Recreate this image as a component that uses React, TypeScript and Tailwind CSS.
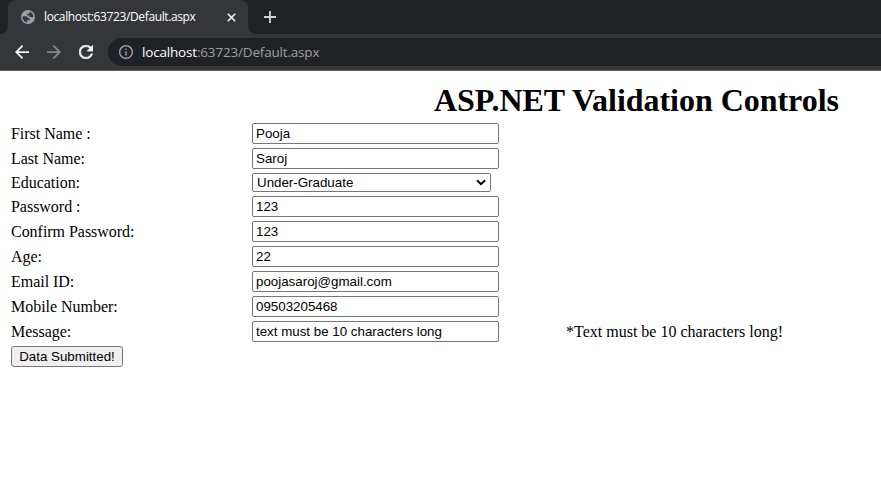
import React from "react";

const serif = "font-['Liberation_Serif','Times_New_Roman',serif]";
const sans = "font-['Liberation_Sans',Arial,sans-serif]";
const chromeFont = "font-['Open_Sans','Noto_Sans',sans-serif]";

type Field = { label: string; value: string; kind?: "select"; error?: string };

const fields: Field[] = [
  { label: "First Name :", value: "Pooja" },
  { label: "Last Name:", value: "Saroj" },
  { label: "Education:", value: "Under-Graduate", kind: "select" },
  { label: "Password :", value: "123" },
  { label: "Confirm Password:", value: "123" },
  { label: "Age:", value: "22" },
  { label: "Email ID:", value: "poojasaroj@gmail.com" },
  { label: "Mobile Number:", value: "09503205468" },
  {
    label: "Message:",
    value: "text must be 10 characters long",
    error: "*Text must be 10 characters long!",
  },
];

function GlobeIcon() {
  return (
    <svg width="14" height="14" viewBox="0 0 14 14">
      <circle cx="7" cy="7" r="7" fill="#9aa0a6" />
      <path
        d="M1.6 6.2 H4.6 C6.4 6.2 7 7.2 7 8.6 H8.8 V10.2 H6.2 V12.3 C3.4 12 1.4 9.6 1.6 6.2Z M8.6 1.8 C11 2.4 12.5 4.6 12.4 7.4 L11 6.9 H8.6 V5.4 H6.2 V3.8 H8.6 Z"
        fill="#35363a"
      />
    </svg>
  );
}

function TabStrip() {
  return (
    <div className="flex h-[34px] bg-[#202124]">
      <div className="flex w-2 items-end bg-[#35363a]">
        <div className="h-[34px] w-2 rounded-br-lg bg-[#202124]" />
      </div>
      <div className="flex w-[240px] items-center rounded-t-lg bg-[#35363a] pl-[13px]">
        <GlobeIcon />
        <span
          className={`${chromeFont} ml-[9px] w-[180px] whitespace-nowrap text-[12px] leading-4 tracking-[-0.38px] text-white`}
        >
          localhost:63723/Default.aspx
        </span>
        <svg className="ml-[3px]" width="9" height="9" viewBox="0 0 9 9">
          <path d="M.8 .8 8.2 8.2M8.2 .8 .8 8.2" stroke="#f1f3f4" strokeWidth="1.6" />
        </svg>
      </div>
      <div className="flex w-2 bg-[#35363a]">
        <div className="h-[34px] w-2 rounded-bl-lg bg-[#202124]" />
      </div>
      <svg className="ml-2 mt-[11px]" width="12" height="12" viewBox="0 0 12 12">
        <path d="M6 0V12M0 6H12" stroke="#d2d4d7" strokeWidth="1.8" />
      </svg>
    </div>
  );
}

function Toolbar() {
  return (
    <div className="flex h-[37px] items-center border-b border-[#5b5b60] bg-[#35363a] pl-[15px]">
      <svg width="14" height="14" viewBox="4 4 16 16" fill="#f1f3f4">
        <path d="M20 11H7.83l5.59-5.59L12 4l-8 8 8 8 1.41-1.41L7.83 13H20v-2z" />
      </svg>
      <svg className="ml-[18px]" width="14" height="14" viewBox="4 4 16 16" fill="#86888b">
        <path d="M12 4l-1.41 1.41L16.17 11H4v2h12.17l-5.58 5.59L12 20l8-8z" />
      </svg>
      <svg
        className="ml-[18px]"
        width="14"
        height="14"
        viewBox="4 4 16 16"
        fill="#f1f3f4"
        stroke="#f1f3f4"
        strokeWidth="0.5"
      >
        <path d="M17.65 6.35C16.2 4.9 14.21 4 12 4c-4.42 0-7.99 3.58-7.99 8s3.57 8 7.99 8c3.73 0 6.84-2.55 7.73-6h-2.08c-.82 2.33-3.04 4-5.65 4-3.31 0-6-2.69-6-6s2.69-6 6-6c1.66 0 3.14.69 4.22 1.78L13 11h7V4l-2.35 2.35z" />
      </svg>
      <div className="ml-[15px] flex h-7 flex-1 items-center rounded-l-full bg-[#202124] pl-[11px]">
        <svg width="14" height="14" viewBox="2 2 20 20" fill="#9aa0a6">
          <path d="M11 17h2v-6h-2v6zm1-15C6.48 2 2 6.48 2 12s4.48 10 10 10 10-4.48 10-10S17.52 2 12 2zm0 18c-4.41 0-8-3.59-8-8s3.59-8 8-8 8 3.59 8 8-3.59 8-8 8zM11 9h2V7h-2v2z" />
        </svg>
        <span
          className={`${chromeFont} ml-[9px] whitespace-nowrap text-[13.5px] leading-5 tracking-[-0.18px] text-[#9aa0a6]`}
        >
          <span className="text-white">localhost</span>:63723/Default.aspx
        </span>
      </div>
    </div>
  );
}

function FieldControl({ field }: { field: Field }) {
  if (field.kind === "select") {
    return (
      <div className="relative h-[19px] w-[239px]">
        <select
          aria-label={field.label}
          className={`${sans} block h-[19px] w-[239px] appearance-none rounded-[2px] border border-[#767676] bg-white pl-1 text-[13.333px] leading-[17px] text-black`}
        >
          <option>{field.value}</option>
        </select>
        <svg
          className="pointer-events-none absolute right-[5px] top-[6px]"
          width="10"
          height="7"
          viewBox="0 0 10 7"
          fill="none"
        >
          <path d="M1 1.2 5 5.2 9 1.2" stroke="#000" strokeWidth="2" />
        </svg>
      </div>
    );
  }
  return (
    <input
      aria-label={field.label}
      defaultValue={field.value}
      className={`${sans} block h-[21px] w-[247px] rounded-[2px] border border-[#767676] bg-white px-[3px] text-[13.333px] leading-[15px] text-black`}
    />
  );
}

export default function App() {
  return (
    <div className="h-[492px] w-[881px] overflow-hidden bg-white text-black">
      <TabStrip />
      <Toolbar />
      <main className={`${serif} px-[11px] text-[16px]`}>
        <h1 className="ml-[423px] whitespace-nowrap pt-[11px] text-[32px] font-bold leading-[37px] tracking-[-0.03px]">
          ASP.NET Validation Controls
        </h1>
        <form className="flex flex-col items-start gap-1 pt-1">
          {fields.map((field) => (
            <div key={field.label} className="flex items-center">
              <label className="w-[241px] whitespace-nowrap leading-[19px] tracking-[-0.03px]">
                {field.label}
              </label>
              <FieldControl field={field} />
              {field.error && (
                <span className="ml-[67px] whitespace-nowrap leading-[19px]">{field.error}</span>
              )}
            </div>
          ))}
          <button
            type="button"
            className={`${sans} h-[21px] w-[112px] whitespace-nowrap rounded-[3px] border border-[#767676] bg-[#efefef] text-center text-[13.333px] leading-[15px]`}
          >
            Data Submitted!
          </button>
        </form>
      </main>
    </div>
  );
}
